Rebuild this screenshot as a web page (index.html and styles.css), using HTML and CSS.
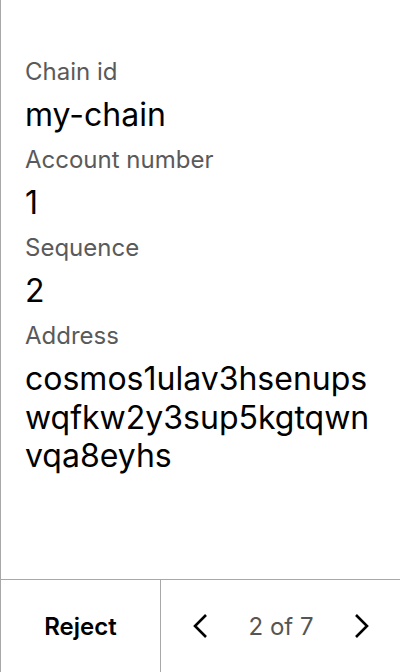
FILE: index.html
```html
<!DOCTYPE html>
<html>
<head>
<meta charset="utf-8">
<link rel="stylesheet" href="styles.css">
</head>
<body>
<div class="screen">
  <div class="content">
    <div class="field">
      <div class="label">Chain id</div>
      <div class="value">my-chain</div>
    </div>
    <div class="field">
      <div class="label">Account number</div>
      <div class="value">1</div>
    </div>
    <div class="field">
      <div class="label">Sequence</div>
      <div class="value">2</div>
    </div>
    <div class="field">
      <div class="label">Address</div>
      <div class="value">cosmos1ulav3hsenupswqfkw2y3sup5kgtqwnvqa8eyhs</div>
    </div>
  </div>
  <div class="footer">
    <div class="reject">Reject</div>
    <div class="pager">
      <svg class="chev" width="16" height="26" viewBox="0 0 16 26"><path d="M14 2 L3 13 L14 24" fill="none" stroke="#000" stroke-width="2.6"/></svg>
      <span class="count">2 of 7</span>
      <svg class="chev" width="16" height="26" viewBox="0 0 16 26"><path d="M2 2 L13 13 L2 24" fill="none" stroke="#000" stroke-width="2.6"/></svg>
    </div>
  </div>
</div>
</body>
</html>
```

FILE: styles.css
```css
html, body {
  margin: 0;
  padding: 0;
  background: #fff;
}
body {
  font-family: Inter, "Noto Sans", sans-serif;
  color: #000;
}
.screen {
  width: 400px;
  height: 672px;
  box-sizing: border-box;
  border-left: 1px solid #a8a8a8;
  display: flex;
  flex-direction: column;
}
.content {
  flex: 1;
  padding: 57px 24px 0 24px;
  display: flex;
  flex-direction: column;
  gap: 10.5px;
}
.field {
  display: flex;
  flex-direction: column;
  gap: 10px;
}
.label {
  font-size: 24px;
  line-height: 29px;
  color: #5a5a5a;
}
.value {
  font-size: 32px;
  line-height: 38.5px;
  word-break: break-all;
}
.footer {
  height: 92px;
  border-top: 1px solid #a8a8a8;
  display: flex;
}
.reject {
  width: 159px;
  border-right: 1px solid #a8a8a8;
  display: flex;
  align-items: center;
  justify-content: center;
  font-size: 24px;
  font-weight: 600;
}
.pager {
  flex: 1;
  display: flex;
  align-items: center;
  justify-content: space-between;
  padding: 0 30px 0 31px;
}
.count {
  font-size: 24px;
  color: #555;
}
```
